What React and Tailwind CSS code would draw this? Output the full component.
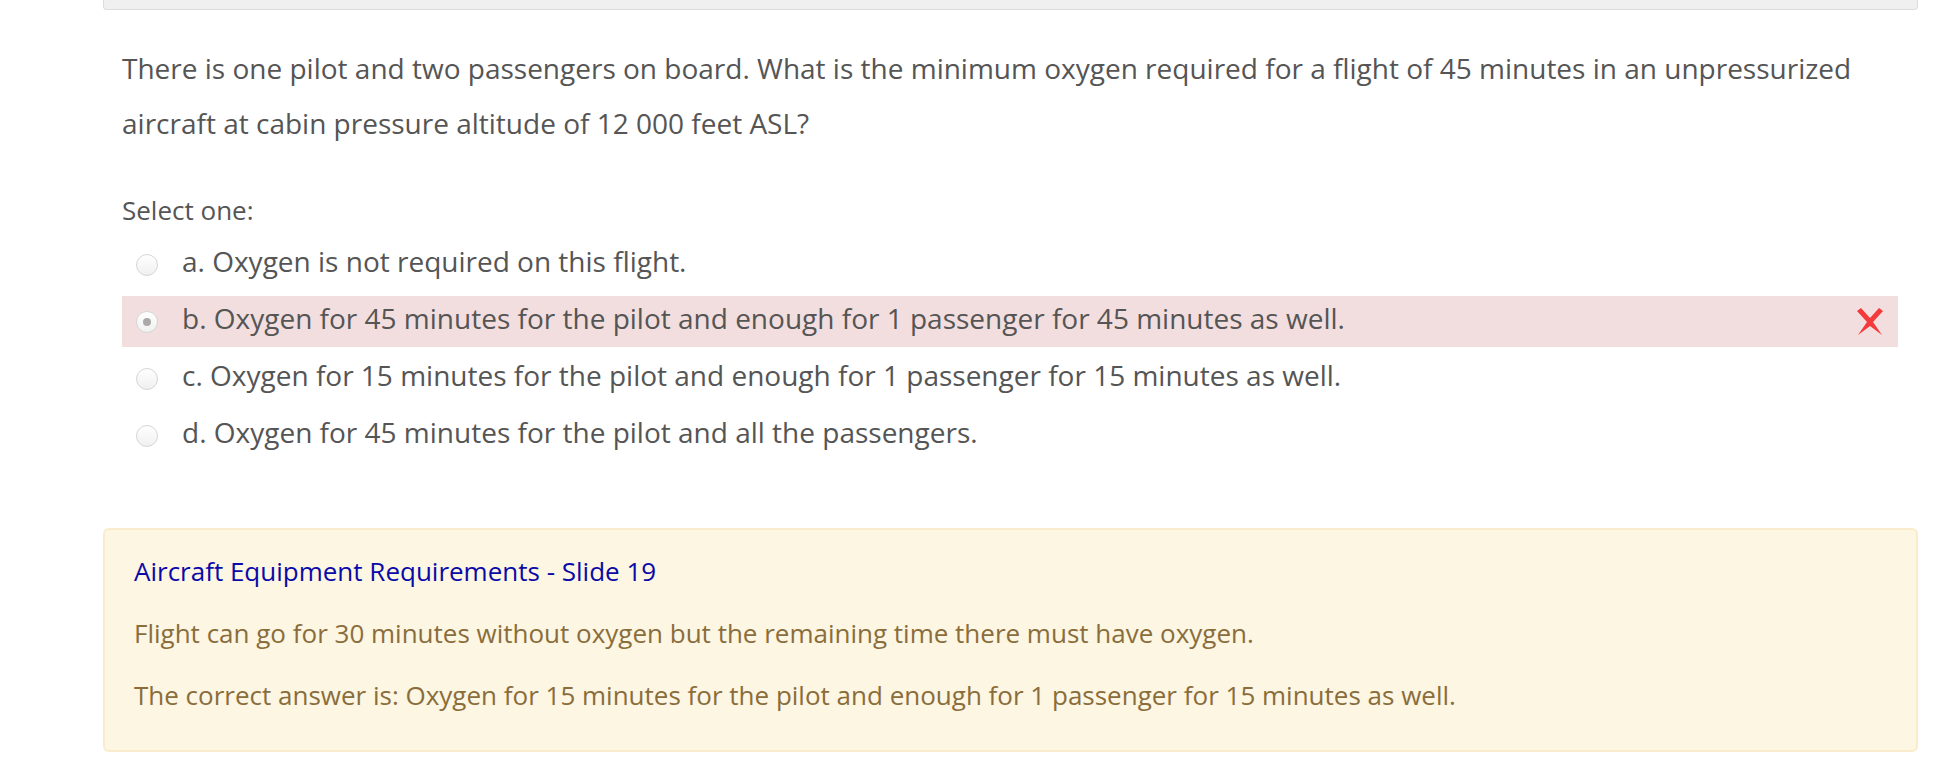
export default function App() {
  const options = [
    { key: 'a', text: 'a. Oxygen is not required on this flight.' },
    { key: 'b', text: 'b. Oxygen for 45 minutes for the pilot and enough for 1 passenger for 45 minutes as well.', checked: true },
    { key: 'c', text: 'c. Oxygen for 15 minutes for the pilot and enough for 1 passenger for 15 minutes as well.' },
    { key: 'd', text: 'd. Oxygen for 45 minutes for the pilot and all the passengers.' },
  ]

  return (
    <div className="min-h-screen bg-white text-[#555] pl-[103px] pr-[16px]" style={{ fontFamily: '"Open Sans", sans-serif' }}>
      {/* Previous block edge */}
      <div className="h-[10px] bg-[#f0f0f0] border border-t-0 border-[#dcdcdc] rounded-b-[4px]" />

      <div className="pl-[19px] pr-[20px]">
        {/* Question */}
        <p className="mt-[31px] text-[28px] leading-[55px]">
          There is one pilot and two passengers on board. What is the minimum oxygen required for a flight of 45 minutes in an unpressurized aircraft at cabin pressure altitude of 12 000 feet ASL?
        </p>

        {/* Answers */}
        <p className="mt-[41px] text-[26px] leading-[36px]">Select one:</p>
        <div className="mt-[11px] flex flex-col gap-[6px]">
          {options.map((o) => (
            <div
              key={o.key}
              className={`h-[51px] flex items-center pl-[14px] ${o.checked ? 'bg-[#f2dede]' : ''}`}
            >
              <span className="w-[22px] h-[22px] rounded-full border border-[#d6d6d6] bg-gradient-to-b from-white to-[#f0f0f0] flex items-center justify-center">
                {o.checked && <span className="w-[8px] h-[8px] rounded-full bg-[#a9a9a9]" />}
              </span>
              <span className="ml-[24px] text-[28px] leading-[40px] -mt-[7px]">{o.text}</span>
              {o.checked && (
                <svg className="ml-auto mr-[13px]" width="30" height="30" viewBox="0 0 30 30">
                  <path d="M2 4 L6 1 L15 11 L24 1 L28 4 L18 15 L27 28 L15 19 L3 28 L12 15 Z" fill="#f5383a" />
                </svg>
              )}
            </div>
          ))}
        </div>
      </div>

      {/* Feedback */}
      <div className="mt-[67px] bg-[#fcf6e3] border-2 border-[#faebcc] rounded-[6px] px-[29px] pt-[23px] pb-[37px] text-[26px] text-[#8a6d3b]">
        <a className="text-[#0a0aa8] leading-[36px] block">Aircraft Equipment Requirements - Slide 19</a>
        <p className="mt-[26px] leading-[36px]">Flight can go for 30 minutes without oxygen but the remaining time there must have oxygen.</p>
        <p className="mt-[26px] leading-[36px]">The correct answer is: Oxygen for 15 minutes for the pilot and enough for 1 passenger for 15 minutes as well.</p>
      </div>
    </div>
  )
}
